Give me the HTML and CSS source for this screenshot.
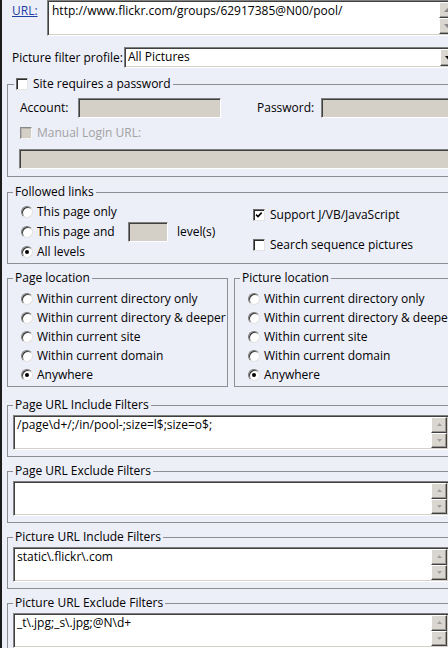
FILE: index.html
```html
<!DOCTYPE html>
<html>
<head>
<meta charset="utf-8">
<title>Project options</title>
<link rel="stylesheet" href="styles.css">
</head>
<body>
<div class="page">
  <div class="url-row">
    <a class="url-label" href="#">URL:</a>
    <div class="textbox url-box">
      <div class="tb-text">http://www.flickr.com/groups/62917385@N00/pool/</div>
      <div class="spin">
        <span class="sbtn"><svg width="7" height="4" viewBox="0 0 7 4"><path d="M0 4 L3.5 0 L7 4 Z" fill="#8a8a8a"/></svg></span>
        <span class="sbtn"><svg width="7" height="4" viewBox="0 0 7 4"><path d="M0 0 L7 0 L3.5 4 Z" fill="#8a8a8a"/></svg></span>
      </div>
    </div>
  </div>

  <div class="profile-row">
    <span class="profile-label">Picture filter profile:</span>
    <div class="select">
      <span class="sel-text">All Pictures</span>
      <span class="sel-btn"><svg width="7" height="4" viewBox="0 0 7 4"><path d="M0 0 L7 0 L3.5 4 Z" fill="#000"/></svg></span>
    </div>
  </div>

  <fieldset class="group pw-group">
    <legend><span class="leg-in"><span class="check"></span><span>Site requires a password</span></span></legend>
    <div class="acct-row">
      <span class="acct-lbl">Account:</span>
      <span class="field dis acct-field"></span>
      <span class="pw-lbl">Password:</span>
      <span class="field dis pw-field"></span>
    </div>
    <div class="manual-row">
      <span class="check dis"></span>
      <span class="grey">Manual Login URL:</span>
    </div>
    <div class="field dis manual-field"></div>
  </fieldset>

  <fieldset class="group follow-group">
    <legend>Followed links</legend>
    <div class="follow-body">
      <div class="follow-left">
        <div class="opt r20"><span class="radio"></span><span>This page only</span></div>
        <div class="opt r20"><span class="radio"></span><span class="and-lbl">This page and</span><span class="field dis lvl-field"></span><span class="lvl-lbl">level(s)</span></div>
        <div class="opt r19"><span class="radio on"></span><span>All levels</span></div>
      </div>
      <div class="follow-right">
        <div class="copt"><span class="check on"><svg width="12" height="12" viewBox="0 0 12 12"><path d="M2.5 5.5 L4.8 7.8 L9.2 3.2" fill="none" stroke="#000" stroke-width="1.9"/></svg></span><span>Support J/VB/JavaScript</span></div>
        <div class="copt second"><span class="check"></span><span>Search sequence pictures</span></div>
      </div>
    </div>
  </fieldset>

  <div class="loc-row">
    <fieldset class="group loc-group page-loc">
      <legend>Page location</legend>
      <div class="loc-body">
        <div class="opt r19"><span class="radio"></span><span>Within current directory only</span></div>
        <div class="opt r19"><span class="radio"></span><span>Within current directory &amp; deeper</span></div>
        <div class="opt r19"><span class="radio"></span><span>Within current site</span></div>
        <div class="opt r19"><span class="radio"></span><span>Within current domain</span></div>
        <div class="opt r19"><span class="radio on"></span><span>Anywhere</span></div>
      </div>
    </fieldset>
    <fieldset class="group loc-group pic-loc">
      <legend>Picture location</legend>
      <div class="loc-body">
        <div class="opt r19"><span class="radio"></span><span>Within current directory only</span></div>
        <div class="opt r19"><span class="radio"></span><span>Within current directory &amp; deeper</span></div>
        <div class="opt r19"><span class="radio"></span><span>Within current site</span></div>
        <div class="opt r19"><span class="radio"></span><span>Within current domain</span></div>
        <div class="opt r19"><span class="radio on"></span><span>Anywhere</span></div>
      </div>
    </fieldset>
  </div>

  <fieldset class="group filter-group first">
    <legend>Page URL Include Filters</legend>
    <div class="filter-body">
      <div class="textbox filter-box">
        <div class="tb-text">/page\d+/;/in/pool-;size=l$;size=o$;</div>
        <div class="spin">
          <span class="sbtn"><svg width="5" height="3" viewBox="0 0 5 3"><path d="M0 3 L2.5 0 L5 3 Z" fill="#a0a0a0"/></svg></span>
          <span class="sbtn"><svg width="5" height="3" viewBox="0 0 5 3"><path d="M0 0 L5 0 L2.5 3 Z" fill="#a0a0a0"/></svg></span>
        </div>
      </div>
    </div>
  </fieldset>

  <fieldset class="group filter-group">
    <legend>Page URL Exclude Filters</legend>
    <div class="filter-body">
      <div class="textbox filter-box">
        <div class="tb-text"></div>
        <div class="spin">
          <span class="sbtn"><svg width="5" height="3" viewBox="0 0 5 3"><path d="M0 3 L2.5 0 L5 3 Z" fill="#a0a0a0"/></svg></span>
          <span class="sbtn"><svg width="5" height="3" viewBox="0 0 5 3"><path d="M0 0 L5 0 L2.5 3 Z" fill="#a0a0a0"/></svg></span>
        </div>
      </div>
    </div>
  </fieldset>

  <fieldset class="group filter-group">
    <legend>Picture URL Include Filters</legend>
    <div class="filter-body">
      <div class="textbox filter-box">
        <div class="tb-text">static\.flickr\.com</div>
        <div class="spin">
          <span class="sbtn"><svg width="5" height="3" viewBox="0 0 5 3"><path d="M0 3 L2.5 0 L5 3 Z" fill="#a0a0a0"/></svg></span>
          <span class="sbtn"><svg width="5" height="3" viewBox="0 0 5 3"><path d="M0 0 L5 0 L2.5 3 Z" fill="#a0a0a0"/></svg></span>
        </div>
      </div>
    </div>
  </fieldset>

  <fieldset class="group filter-group">
    <legend>Picture URL Exclude Filters</legend>
    <div class="filter-body">
      <div class="textbox filter-box">
        <div class="tb-text">_t\.jpg;_s\.jpg;@N\d+</div>
        <div class="spin">
          <span class="sbtn"><svg width="5" height="3" viewBox="0 0 5 3"><path d="M0 3 L2.5 0 L5 3 Z" fill="#a0a0a0"/></svg></span>
          <span class="sbtn"><svg width="5" height="3" viewBox="0 0 5 3"><path d="M0 0 L5 0 L2.5 3 Z" fill="#a0a0a0"/></svg></span>
        </div>
      </div>
    </div>
  </fieldset>
</div>
</body>
</html>
```

FILE: styles.css
```css
* { box-sizing: border-box; }

html, body {
  margin: 0;
  padding: 0;
  overflow: hidden;
  background: #eceef8;
}

body {
  font-family: "Open Sans", "DejaVu Sans", sans-serif;
  font-size: 12px;
  line-height: 14px;
  color: #000;
}

.page {
  width: 470px;
  height: 648px;
  box-shadow: inset 2px 0 #1c1c1c;
}

/* generic sunken text box */
.textbox {
  display: flex;
  background: #fff;
  border: 1px solid;
  border-color: #808080 #ffffff #ffffff #808080;
  box-shadow: inset 1px 1px #404040, inset -1px -1px #d4d0c8;
  padding: 1px;
}

.tb-text {
  flex: 1;
  padding: 0 2px;
  line-height: 16px;
  white-space: nowrap;
}

.spin {
  display: flex;
  flex-direction: column;
  width: 16px;
  flex: 0 0 16px;
}

.sbtn {
  flex: 1;
  display: flex;
  align-items: center;
  justify-content: center;
  background: #d9d6cf;
  border: 1px solid;
  border-color: #ffffff #404040 #404040 #ffffff;
  box-shadow: inset -1px -1px #9a9892;
}

/* URL row */
.url-row {
  display: flex;
  height: 36px;
}

.url-label {
  flex: 0 0 47px;
  padding: 4px 0 0 12px;
  color: #1f3ea6;
  text-decoration: underline;
}

.url-box {
  flex: 0 0 410px;
  height: 36px;
}

.url-box .tb-text {
  padding: 1px 3px;
}

/* profile row */
.profile-row {
  display: flex;
  align-items: center;
  height: 21px;
  margin-top: 11px;
}

.profile-label {
  flex: 0 0 124px;
  padding-left: 12px;
}

.select {
  flex: 0 0 334px;
  height: 21px;
  display: flex;
  background: #fff;
  border: 1px solid;
  border-color: #808080 #ffffff #ffffff #808080;
  box-shadow: inset 1px 1px #404040, inset -1px -1px #d4d0c8;
  padding: 1px;
}

.sel-text {
  flex: 1;
  padding: 1px 0 0 2px;
}

.sel-btn {
  flex: 0 0 16px;
  display: flex;
  align-items: center;
  justify-content: center;
  background: #d9d6cf;
  border: 1px solid;
  border-color: #ffffff #404040 #404040 #ffffff;
  box-shadow: inset -1px -1px #9a9892;
}

/* group boxes */
.group {
  margin: 0;
  padding: 0;
  border: 1px solid #8e8f94;
  min-width: 0;
}

.group > legend {
  padding: 0 2px;
  margin-left: 5px;
  line-height: 14px;
  height: 14px;
}

.pw-group {
  margin: 9px 0 0 7px;
  width: 452px;
  padding-bottom: 7px;
}

.pw-group > legend {
  margin-left: 6px;
}

.leg-in {
  display: flex;
  align-items: center;
  gap: 5px;
}

/* checkboxes & radios */
.check {
  width: 12px;
  height: 12px;
  flex: 0 0 12px;
  background: #fff;
  border: 1px solid;
  border-color: #6e6e6e #e4e4e4 #e4e4e4 #6e6e6e;
  box-shadow: inset 1px 1px #2a2a2a;
  display: flex;
  align-items: center;
  justify-content: center;
}

.check.dis {
  background: #d4d0c8;
  border-color: #8a8a8a #f4f4f4 #f4f4f4 #8a8a8a;
  box-shadow: inset 1px 1px #b8b5ad;
}

.radio {
  width: 12px;
  height: 12px;
  flex: 0 0 12px;
  border-radius: 50%;
  background: #fff;
  border: 1px solid;
  border-color: #7b7b7b #e2e2e2 #e2e2e2 #7b7b7b;
  box-shadow: inset 1px 1px #3a3a3a;
  display: flex;
  align-items: center;
  justify-content: center;
}

.radio.on::after {
  content: "";
  width: 4px;
  height: 4px;
  border-radius: 50%;
  background: #000;
}

/* disabled fields */
.field {
  display: block;
  height: 20px;
  border: 1px solid;
  border-color: #808080 #ffffff #ffffff #808080;
  box-shadow: inset 1px 1px #404040, inset -1px -1px #d4d0c8;
}

.field.dis {
  background: #d4d0c8;
}

.acct-row {
  display: flex;
  align-items: center;
  height: 20px;
  margin-top: 7px;
}

.acct-lbl {
  flex: 0 0 70px;
  padding-left: 12px;
}

.acct-field {
  flex: 0 0 143px;
}

.pw-lbl {
  flex: 0 0 64px;
  margin-left: 36px;
}

.pw-field {
  flex: 0 0 140px;
}

.manual-row {
  display: flex;
  align-items: center;
  gap: 5px;
  height: 14px;
  margin-top: 8px;
  padding-left: 12px;
}

.grey {
  color: #a2a2a2;
}

.manual-field {
  margin: 9px 0 0 11px;
  width: 440px;
}

/* followed links */
.follow-group {
  margin: 8px 0 0 7px;
  width: 452px;
  padding-bottom: 2px;
}

.follow-body {
  display: flex;
}

.follow-left {
  flex: 0 0 245px;
  padding: 3px 0 0 13px;
}

.opt {
  display: flex;
  align-items: center;
  gap: 4px;
  white-space: nowrap;
}

.r20 { height: 20px; }
.r19 { height: 19px; }

.and-lbl {
  flex: 0 0 87px;
}

.lvl-field {
  flex: 0 0 40px;
}

.lvl-lbl {
  margin-left: 5px;
}

.follow-right {
  padding-top: 9px;
}

.copt {
  display: flex;
  align-items: center;
  gap: 5px;
  height: 14px;
}

.copt.second {
  margin-top: 16px;
}

/* location groups */
.loc-row {
  display: flex;
  margin-top: 7px;
}

.loc-group {
  padding-bottom: 2px;
}

.loc-body {
  padding: 4px 0 0 13px;
}

.page-loc {
  margin-left: 7px;
  width: 221px;
  flex: 0 0 221px;
}

.pic-loc {
  margin-left: 6px;
  width: 230px;
  flex: 0 0 230px;
}

/* filter groups */
.filter-group {
  margin: 7px 0 0 7px;
  width: 450px;
  padding-bottom: 6px;
}

.filter-group.first {
  margin-top: 11px;
}

.filter-body {
  padding: 3px 0 0 5px;
}

.filter-box {
  width: 436px;
  height: 35px;
}
```
